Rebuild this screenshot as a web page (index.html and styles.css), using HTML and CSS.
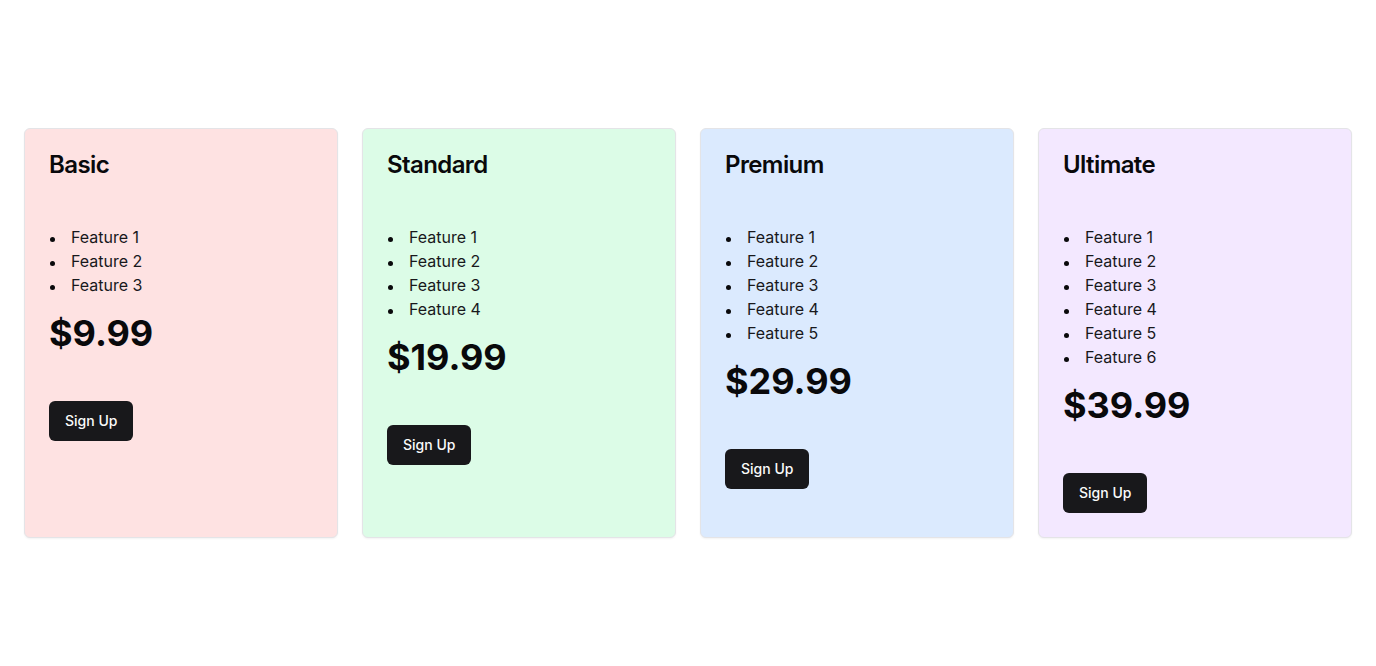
FILE: index.html
```html
<!DOCTYPE html>
<html lang="en">
<head>
<meta charset="utf-8">
<title>Pricing</title>
<link rel="stylesheet" href="styles.css">
</head>
<body>
<main class="page">
  <div class="grid">
    <section class="card card-red">
      <h2 class="title">Basic</h2>
      <ul class="features">
        <li>Feature 1</li>
        <li>Feature 2</li>
        <li>Feature 3</li>
      </ul>
      <p class="price">$9.99</p>
      <div><button class="btn">Sign Up</button></div>
    </section>
    <section class="card card-green">
      <h2 class="title">Standard</h2>
      <ul class="features">
        <li>Feature 1</li>
        <li>Feature 2</li>
        <li>Feature 3</li>
        <li>Feature 4</li>
      </ul>
      <p class="price">$19.99</p>
      <div><button class="btn">Sign Up</button></div>
    </section>
    <section class="card card-blue">
      <h2 class="title">Premium</h2>
      <ul class="features">
        <li>Feature 1</li>
        <li>Feature 2</li>
        <li>Feature 3</li>
        <li>Feature 4</li>
        <li>Feature 5</li>
      </ul>
      <p class="price">$29.99</p>
      <div><button class="btn">Sign Up</button></div>
    </section>
    <section class="card card-purple">
      <h2 class="title">Ultimate</h2>
      <ul class="features">
        <li>Feature 1</li>
        <li>Feature 2</li>
        <li>Feature 3</li>
        <li>Feature 4</li>
        <li>Feature 5</li>
        <li>Feature 6</li>
      </ul>
      <p class="price">$39.99</p>
      <div><button class="btn">Sign Up</button></div>
    </section>
  </div>
</main>
</body>
</html>
```
FILE: styles.css
```css
* { box-sizing: border-box; }
html, body { margin: 0; padding: 0; }
body {
  font-family: Inter, "Liberation Sans", sans-serif;
  color: #09090b;
  background: #ffffff;
}
.page {
  min-height: 666px;
  display: flex;
  align-items: center;
  padding: 0 24px;
}
.grid {
  width: 100%;
  display: grid;
  grid-template-columns: repeat(4, 1fr);
  gap: 24px;
}
.card {
  border: 1px solid #e4e4e7;
  border-radius: 6px;
  box-shadow: 0 1px 2px rgba(0,0,0,0.05);
  padding: 24px;
  display: flex;
  flex-direction: column;
}
.card-red { background: #fee2e2; }
.card-green { background: #dcfce7; }
.card-blue { background: #dbeafe; }
.card-purple { background: #f3e8ff; }
.title {
  margin: 0;
  font-size: 24px;
  line-height: 24px;
  font-weight: 600;
  letter-spacing: -0.6px;
}
.features {
  margin: 48px 0 16px;
  padding: 0;
  list-style: none;
  font-size: 16px;
  line-height: 24px;
  color: #18181b;
}
.features li {
  display: flex;
  align-items: flex-start;
}
.features li::before {
  content: "";
  flex: none;
  width: 5px;
  height: 5px;
  margin: 12px 16px 0 1px;
  border-radius: 50%;
  background: #09090b;
}
.price {
  margin: 0 0 48px;
  font-size: 36px;
  line-height: 40px;
  font-weight: 700;
}
.btn {
  height: 40px;
  padding: 0 16px 1px;
  border: none;
  border-radius: 6px;
  background: #18181b;
  color: #fafafa;
  font-family: inherit;
  font-size: 14px;
  line-height: 20px;
  font-weight: 500;
  cursor: pointer;
}
```
